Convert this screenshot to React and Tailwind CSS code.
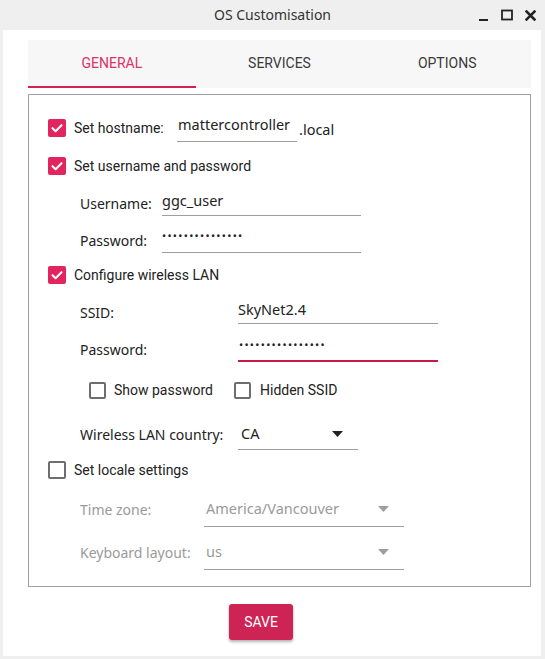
import React from "react";

const ROBOTO = { fontFamily: "Roboto, 'Liberation Sans', sans-serif" };
const UBU = { fontFamily: "'Noto Sans', 'Open Sans', sans-serif" };

function Check({ checked, small }) {
  if (checked) {
    return (
      <div className="w-[18px] h-[18px] rounded-[2px] bg-[#e2245f] flex items-center justify-center shrink-0">
        <svg width="14" height="14" viewBox="0 0 14 14">
          <path d="M2.5 7.2 L5.6 10.2 L11.5 4.2" fill="none" stroke="white" strokeWidth="2.1" strokeLinecap="round" strokeLinejoin="round" />
        </svg>
      </div>
    );
  }
  return <div className={`${small ? "w-[17px] h-[17px]" : "w-[18px] h-[18px]"} rounded-[2px] border-2 border-[#6e6e6e] bg-white shrink-0`} />;
}

function Arrow({ gray }) {
  return (
    <svg width="11" height="6" viewBox="0 0 11 6">
      <path d="M0 0 L11 0 L5.5 6 Z" fill={gray ? "#9e9e9e" : "#222"} />
    </svg>
  );
}

export default function App() {
  return (
    <div className="w-[545px] h-[659px] bg-[#efefef] flex flex-col overflow-hidden">
      {/* title bar */}
      <div className="h-[30px] flex items-center relative shrink-0">
        <div className="flex-1 text-center text-[14px] text-[#333] leading-[30px]" style={UBU}>OS Customisation</div>
        <div className="absolute right-[9px] top-0 h-[30px] flex items-center gap-[12px]">
          <svg width="10" height="14" viewBox="0 0 10 14"><rect x="0" y="11" width="9" height="2" fill="#222" /></svg>
          <svg width="12" height="12" viewBox="0 0 12 12"><rect x="1" y="1.5" width="10" height="9" fill="none" stroke="#222" strokeWidth="1.8" /></svg>
          <svg width="11" height="11" viewBox="0 0 11 11"><path d="M1.5 1.5 L9.5 9.5 M9.5 1.5 L1.5 9.5" stroke="#222" strokeWidth="2.5" strokeLinecap="square" /></svg>
        </div>
      </div>
      {/* content */}
      <div className="ml-[3px] w-[538px] h-[626px] bg-white pl-[25px] pt-[10px] flex flex-col shrink-0" style={ROBOTO}>
        {/* tabs */}
        <div className="w-[503px] h-[48px] bg-[#f7f7f7] flex">
          <div className="flex-1 flex flex-col">
            <div className="flex-1 flex items-center justify-center text-[14px] text-[#d9336a] pt-[1px]">GENERAL</div>
            <div className="h-[2px] bg-[#d02255]" />
          </div>
          <div className="flex-1 flex items-center justify-center text-[14px] text-[#3a3a3a] pt-[1px] pb-[2px]">SERVICES</div>
          <div className="flex-1 flex items-center justify-center text-[14px] text-[#3a3a3a] pt-[1px] pb-[2px]">OPTIONS</div>
        </div>
        {/* box */}
        <div className="mt-[6px] w-[503px] h-[493px] border border-[#a0a0a0] pl-[19px] pt-[14px] flex flex-col text-[14px] text-[#222]">
          {/* R1 hostname */}
          <div className="h-[38px] flex items-center">
            <Check checked />
            <span className="ml-[8px] w-[103px]">Set hostname:</span>
            <div className="w-[120px] h-[28px] border-b border-[#9e9e9e] leading-[20px] text-[14.5px] pl-[1px]" style={UBU}>mattercontroller</div>
            <span className="ml-[2px] mt-[3px] text-[14.5px]" style={UBU}>.local</span>
          </div>
          {/* R2 */}
          <div className="h-[38px] flex items-center">
            <Check checked />
            <span className="ml-[8px]">Set username and password</span>
          </div>
          {/* R3 */}
          <div className="h-[36px] flex items-center pl-[32px]" style={UBU}>
            <span className="w-[82px]">Username:</span>
            <div className="w-[199px] h-[26px] border-b border-[#9e9e9e] leading-[20px] text-[14.5px]">ggc_user</div>
          </div>
          {/* R4 */}
          <div className="h-[38px] flex items-center pl-[32px]" style={UBU}>
            <span className="w-[82px]">Password:</span>
            <div className="w-[199px] h-[26px] border-b border-[#9e9e9e] leading-[18px] text-[11px] tracking-[1.3px]">•••••••••••••••</div>
          </div>
          {/* R5 */}
          <div className="h-[32px] flex items-center">
            <Check checked />
            <span className="ml-[8px]">Configure wireless LAN</span>
          </div>
          {/* R6 */}
          <div className="h-[42px] flex items-center pl-[32px]" style={UBU}>
            <span className="w-[158px]">SSID:</span>
            <div className="w-[200px] h-[24px] border-b border-[#9e9e9e] leading-[18px] text-[14.5px]">SkyNet2.4</div>
          </div>
          {/* R7 */}
          <div className="h-[32px] flex items-center pl-[32px]" style={UBU}>
            <span className="w-[158px]">Password:</span>
            <div className="w-[200px] h-[26px] border-b-2 border-[#c51a4a] leading-[18px] text-[11px] tracking-[1.3px] pl-[1px]">••••••••••••••••</div>
          </div>
          {/* R8 */}
          <div className="h-[50px] flex items-center pl-[41px]">
            <Check small />
            <span className="ml-[8px] w-[120px]">Show password</span>
            <Check small />
            <span className="ml-[9px]">Hidden SSID</span>
          </div>
          {/* R9 */}
          <div className="h-[38px] flex items-center pl-[32px]" style={UBU}>
            <span className="w-[158px]">Wireless LAN country:</span>
            <div className="w-[120px] h-[32px] border-b border-[#9e9e9e] flex items-center pl-[3px] pr-[15px] justify-between">
              <span className="text-[14.5px]">CA</span>
              <Arrow />
            </div>
          </div>
          {/* R10 */}
          <div className="h-[34px] flex items-center">
            <Check />
            <span className="ml-[8px]">Set locale settings</span>
          </div>
          {/* R11 */}
          <div className="h-[44px] flex items-center pl-[32px] text-[#9a9a9a]" style={UBU}>
            <span className="w-[124px]">Time zone:</span>
            <div className="w-[200px] h-[36px] border-b border-[#9e9e9e] flex items-center pl-[2px] pr-[15px] justify-between">
              <span className="text-[14.5px]">America/Vancouver</span>
              <Arrow gray />
            </div>
          </div>
          {/* R12 */}
          <div className="h-[42px] flex items-center pl-[32px] text-[#9a9a9a]" style={UBU}>
            <span className="w-[124px]">Keyboard layout:</span>
            <div className="w-[200px] h-[36px] border-b border-[#9e9e9e] flex items-center pl-[2px] pr-[15px] justify-between">
              <span className="text-[14.5px]">us</span>
              <Arrow gray />
            </div>
          </div>
        </div>
        {/* save */}
        <div className="flex mt-[17px] pl-[201px]">
          <div className="w-[64px] h-[36px] bg-[#cd2355] rounded-[3px] shadow-[0_2px_3px_rgba(0,0,0,0.3)] flex items-center justify-center text-white text-[14px]">SAVE</div>
        </div>
      </div>
    </div>
  );
}
